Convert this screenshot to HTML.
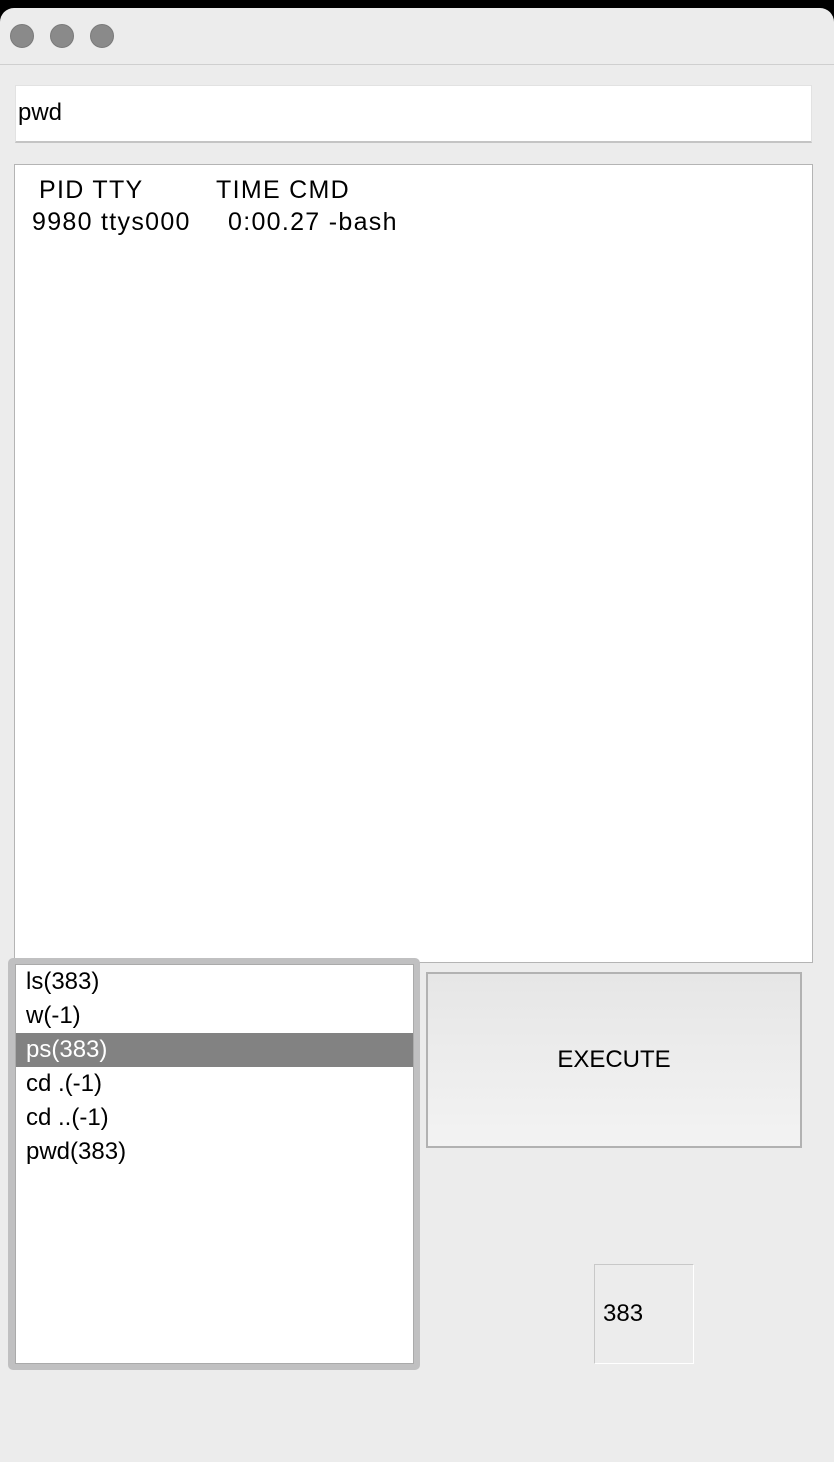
<!DOCTYPE html><html><head><style>
*{margin:0;padding:0;box-sizing:border-box}
body{width:834px;height:1462px;background:#000;position:relative;overflow:hidden;font-family:"Liberation Sans",Arial,sans-serif;font-size:24px;color:#000}
.win{position:absolute;left:0;top:8px;width:834px;height:1454px;background:#ececec;border-radius:14px 14px 0 0}
.tb{position:absolute;left:0;top:0;width:834px;height:57px;border-bottom:1px solid #cfcfcf}
.c{position:absolute;top:16px;width:24px;height:24px;border-radius:50%;background:#8a8a8a;border:1px solid #7a7a7a}
.a{position:absolute}
.t{position:absolute;white-space:pre;font-size:25px;letter-spacing:1.3px}
</style></head><body>
<div class="win">
<div class="tb"><div class="c" style="left:10px"></div><div class="c" style="left:50px"></div><div class="c" style="left:90px"></div></div>
</div>
<div class="a" style="left:15px;top:85px;width:797px;height:58px;background:#fff;border:1px solid #e2e2e2;border-bottom:2px solid #c4c4c4;padding:13px 0 0 2px">pwd</div>
<div class="a" style="left:14px;top:164px;width:799px;height:799px;background:#fff;border:1px solid #b4b4b4">
<span class="t" style="left:24px;top:11px">PID TTY</span>
<span class="t" style="left:201px;top:11px">TIME CMD</span>
<span class="t" style="left:17px;top:43px">9980 ttys000</span>
<span class="t" style="left:213px;top:43px">0:00.27 -bash</span>
</div>
<div class="a" style="left:8px;top:958px;width:412px;height:412px;background:#c0c0c1;border-radius:5px"></div>
<div class="a" style="left:15px;top:964px;width:399px;height:400px;background:#fff;border:1px solid #aaa;line-height:34px">
<div style="padding-left:10px">ls(383)</div>
<div style="padding-left:10px">w(-1)</div>
<div style="padding-left:10px;background:#828282;color:#fff">ps(383)</div>
<div style="padding-left:10px">cd .(-1)</div>
<div style="padding-left:10px">cd ..(-1)</div>
<div style="padding-left:10px">pwd(383)</div>
</div>
<div class="a" style="left:426px;top:972px;width:376px;height:176px;border:2px solid #b2b2b2;background:linear-gradient(#e6e6e6,#f3f3f3);text-align:center;line-height:172px">EXECUTE</div>
<div class="a" style="left:594px;top:1264px;width:100px;height:100px;border:1px solid #fff;border-left-color:#c8c8c8;border-top-color:#c8c8c8;padding:35px 0 0 8px">383</div>
</body></html>
